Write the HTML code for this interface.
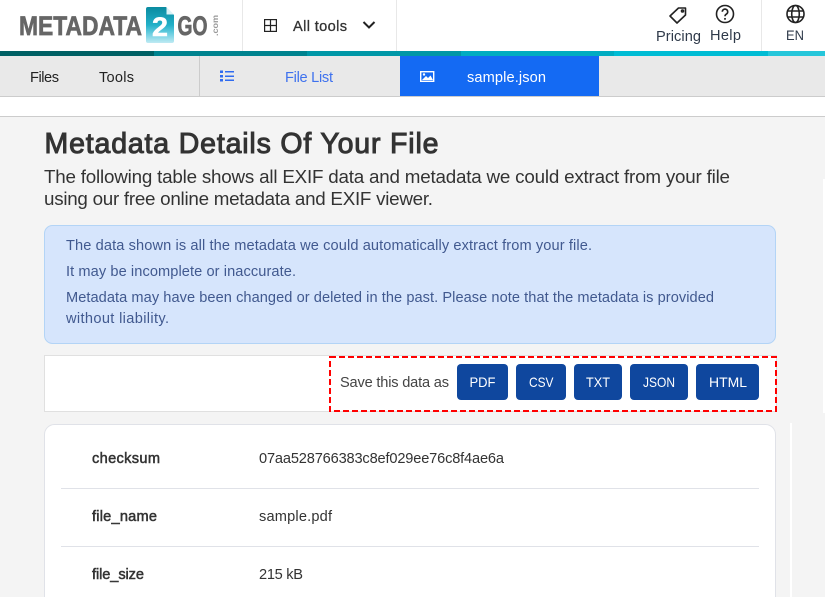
<!DOCTYPE html>
<html lang="en"><head><meta charset="utf-8"><title>Metadata Details Of Your File</title>
<style>
html,body{margin:0;padding:0;width:825px;height:597px;overflow:hidden;background:#f4f4f4}
svg{display:block}
text{font-family:"Liberation Sans",Arial,sans-serif;white-space:pre}
.b{font-weight:700}
.n{font-size:14.6px;fill:#333}
.a{font-size:14.6px;fill:#41598f}
.w{font-size:14.6px;fill:#fff;font-weight:400}
.c{font-size:14px;fill:#fff}
.l{font-weight:700;fill:#666;stroke:#666;stroke-width:.7px;font-size:27px}
</style></head><body>
<svg width="825" height="597" viewBox="0 0 825 597" xmlns="http://www.w3.org/2000/svg">
<defs><linearGradient id="g" x1="0" y1="0" x2="0" y2="1"><stop offset="0" stop-color="#0a8ba0"/><stop offset=".5" stop-color="#22b0c8"/><stop offset=".75" stop-color="#6fd0e2"/><stop offset="1" stop-color="#bfeaf3"/></linearGradient></defs>
<!-- header -->
<rect width="825" height="116" fill="#fff"/>
<rect x="242" y="0" width="1" height="51" fill="#e8e8e8"/>
<rect x="396" y="0" width="1" height="51" fill="#e8e8e8"/>
<rect x="761" y="0" width="1" height="51" fill="#e8e8e8"/>
<!-- logo -->
<text x="19" y="35" class="l" textLength="123" lengthAdjust="spacingAndGlyphs">METADATA</text>
<path d="M148 7H166L174 15V41a2 2 0 0 1-2 2H148a2 2 0 0 1-2-2V9a2 2 0 0 1 2-2Z" fill="url(#g)"/>
<path d="M166.500 7V14.500H174Z" fill="#d9f2f7"/>
<text x="152" y="36" class="b" font-size="27" fill="#fff" stroke="#fff" stroke-width=".5" textLength="16" lengthAdjust="spacingAndGlyphs">2</text>
<text x="177.500" y="35" class="l" textLength="30" lengthAdjust="spacingAndGlyphs">GO</text>
<text transform="translate(218 36) rotate(-90)" class="b" font-size="8.500" fill="#999" textLength="21" lengthAdjust="spacingAndGlyphs">.com</text>
<!-- all tools -->
<g fill="none" stroke="#222" stroke-width="1.200"><rect x="264.600" y="19.600" width="11.800" height="11.800"/><path d="M270.500 19.600V31.400M264.600 25.500H276.400"/></g>
<text x="293" y="31" class="n" stroke="#333" stroke-width=".3" textLength="54" lengthAdjust="spacing">All tools</text>
<path d="M363.500 22L369 27.500L374.500 22" fill="none" stroke="#222" stroke-width="2"/>
<!-- right nav -->
<g fill="none" stroke="#222" stroke-width="1.600" stroke-linejoin="round">
<path d="M678.500 8H685.500V15L677 23L670 16Z"/><circle cx="682.500" cy="11" r="1"/>
<circle cx="725" cy="14" r="8.500"/><path d="M722.300 11.800a2.700 2.700 0 1 1 4.100 2.300c-.9.600-1.400 1.100-1.400 2.200"/>
<circle cx="795.500" cy="14" r="8.500"/><ellipse cx="795.500" cy="14" rx="3.800" ry="8.500"/><path d="M787.500 11H803.500M787.500 17H803.500"/>
</g>
<circle cx="725" cy="18.900" r="1" fill="#222"/>
<text x="656" y="41" class="n" textLength="45" lengthAdjust="spacing" style="fill:#2f3a4a">Pricing</text>
<text x="710" y="40" class="n" textLength="31" lengthAdjust="spacing" style="fill:#2f3a4a">Help</text>
<text x="786" y="40" font-size="14" fill="#2f3a4a" textLength="18" lengthAdjust="spacingAndGlyphs">EN</text>
<!-- colour bar -->
<rect x="0" y="51" width="154" height="5" fill="#006064"/>
<rect x="154" y="51" width="153" height="5" fill="#00838f"/>
<rect x="307" y="51" width="154" height="5" fill="#0097a7"/>
<rect x="461" y="51" width="153" height="5" fill="#00acc1"/>
<rect x="614" y="51" width="154" height="5" fill="#00bcd4"/>
<rect x="768" y="51" width="57" height="5" fill="#26c6da"/>
<!-- tab bar -->
<rect x="0" y="56" width="825" height="40" fill="#e9e9e9"/>
<rect x="0" y="96" width="825" height="1" fill="#ccc"/>
<rect x="199" y="56" width="1" height="40" fill="#ccc"/>
<rect x="400" y="56" width="199" height="40" fill="#146af3"/>
<text x="30" y="82" class="n" textLength="29" lengthAdjust="spacing" style="fill:#222">Files</text>
<text x="99" y="82" class="n" textLength="35" lengthAdjust="spacing" style="fill:#222">Tools</text>
<g fill="#2f6bf0"><rect x="220" y="70.500" width="3" height="2.500"/><rect x="220" y="75" width="3" height="2.500"/><rect x="220" y="79" width="3" height="2.500"/><rect x="225" y="71" width="9" height="1.500"/><rect x="225" y="75.500" width="9" height="1.500"/><rect x="225" y="79.500" width="9" height="1.500"/></g>
<text x="285" y="82" class="n" textLength="48" lengthAdjust="spacing" style="fill:#3f72ee">File List</text>
<rect x="420.700" y="71.700" width="13" height="9.600" fill="none" stroke="#fff" stroke-width="1.400"/>
<path d="M422 80L426 76L428 78L430.500 75.500L433 80Z" fill="#fff"/><circle cx="424" cy="74.500" r="1.200" fill="#fff"/>
<text x="467" y="82" class="w" textLength="79" lengthAdjust="spacing">sample.json</text>
<!-- page -->
<rect x="0" y="116" width="825" height="1" fill="#ccc"/>
<rect x="0" y="117" width="825" height="480" fill="#f4f4f4"/>
<rect x="823" y="179" width="2" height="234" fill="#fff"/>
<rect x="790" y="423" width="2" height="174" fill="#fff"/>
<text x="44.500" y="153" font-size="28.500" fill="#333" stroke="#333" stroke-width="1" textLength="394" lengthAdjust="spacing">Metadata Details Of Your File</text>
<text x="44" y="183" font-size="18.800" fill="#333" textLength="686" lengthAdjust="spacing">The following table shows all EXIF data and metadata we could extract from your file</text>
<text x="44" y="205" font-size="18.800" fill="#333" textLength="389" lengthAdjust="spacing">using our free online metadata and EXIF viewer.</text>
<!-- alert -->
<rect x="44.500" y="225.500" width="731" height="118" rx="8" fill="#d6e5fc" stroke="#b3d4f6"/>
<text x="66" y="250" class="a" textLength="526" lengthAdjust="spacing">The data shown is all the metadata we could automatically extract from your file.</text>
<text x="66" y="276" class="a" textLength="230" lengthAdjust="spacing">It may be incomplete or inaccurate.</text>
<text x="66" y="302" class="a" textLength="648" lengthAdjust="spacing">Metadata may have been changed or deleted in the past. Please note that the metadata is provided</text>
<text x="66" y="323" class="a" textLength="103" lengthAdjust="spacing">without liability.</text>
<!-- save bar -->
<rect x="44.500" y="355.500" width="732" height="56" fill="#fff" stroke="#e0e0e0"/>
<rect x="330" y="357" width="446" height="54" fill="#fff" stroke="#f00" stroke-width="2" stroke-dasharray="6 3"/>
<text x="340" y="387" class="n" textLength="109" lengthAdjust="spacing" style="fill:#444">Save this data as</text>
<g fill="#0f479e">
<rect x="457" y="364" width="51" height="36" rx="4"/><rect x="516" y="364" width="50" height="36" rx="4"/><rect x="574" y="364" width="48" height="36" rx="4"/><rect x="630" y="364" width="58" height="36" rx="4"/><rect x="696" y="364" width="63" height="36" rx="4"/>
</g>
<text x="469.500" y="387" class="c" textLength="26" lengthAdjust="spacingAndGlyphs">PDF</text>
<text x="529" y="387" class="c" textLength="24.500" lengthAdjust="spacingAndGlyphs">CSV</text>
<text x="586" y="387" class="c" textLength="24" lengthAdjust="spacingAndGlyphs">TXT</text>
<text x="643" y="387" class="c" textLength="32" lengthAdjust="spacingAndGlyphs">JSON</text>
<text x="709" y="387" class="c" textLength="38" lengthAdjust="spacingAndGlyphs">HTML</text>
<!-- table card -->
<path d="M44.500 600V434.500a10 10 0 0 1 10-10H765.500a10 10 0 0 1 10 10V600Z" fill="#fff" stroke="#e0e2e8"/>
<rect x="61" y="488" width="698" height="1" fill="#e0e2e8"/>
<rect x="61" y="546" width="698" height="1" fill="#e0e2e8"/>
<text x="92" y="463" class="n" stroke="#333" stroke-width=".5" textLength="68" lengthAdjust="spacing">checksum</text>
<text x="259" y="463" class="n" textLength="245" lengthAdjust="spacing">07aa528766383c8ef029ee76c8f4ae6a</text>
<text x="92" y="521" class="n" stroke="#333" stroke-width=".5" textLength="65" lengthAdjust="spacing">file_name</text>
<text x="259" y="521" class="n" textLength="73" lengthAdjust="spacing">sample.pdf</text>
<text x="92" y="579" class="n" stroke="#333" stroke-width=".5" textLength="52" lengthAdjust="spacing">file_size</text>
<text x="259" y="579" class="n" textLength="44" lengthAdjust="spacing">215 kB</text>
</svg>
</body></html>
